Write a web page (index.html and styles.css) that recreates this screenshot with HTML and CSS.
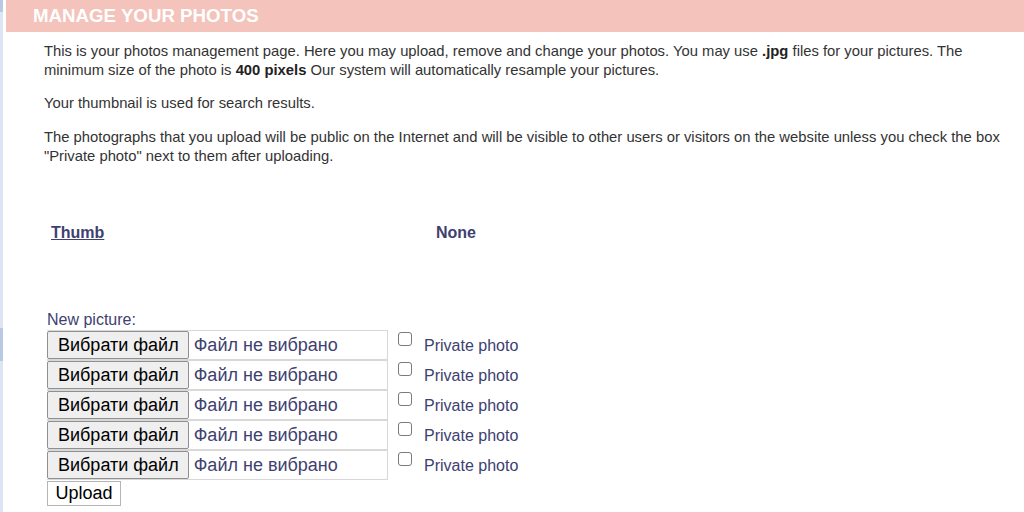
FILE: index.html
```html
<!DOCTYPE html>
<html>
<head>
<meta charset="utf-8">
<link rel="stylesheet" href="styles.css">
</head>
<body>
<div class="page">
  <div class="stripe"></div>
  <div class="main">
    <div class="header">MANAGE YOUR PHOTOS</div>
    <div class="content">
      <p class="para">This is your photos management page. Here you may upload, remove and change your photos. You may use <b>.jpg</b> files for your pictures. The minimum size of the photo is <b>400 pixels</b> Our system will automatically resample your pictures.</p>
      <p class="para">Your thumbnail is used for search results.</p>
      <p class="para">The photographs that you upload will be public on the Internet and will be visible to other users or visitors on the website unless you check the box "Private photo" next to them after uploading.</p>

      <div class="thumbs">
        <a class="thumb-link" href="#">Thumb</a>
        <span class="thumb-none">None</span>
      </div>

      <div class="upload">
        <div class="new-label">New picture:</div>
        <div class="file-row">
          <div class="file"><span class="file-btn">Вибрати файл</span><span class="file-name">Файл не вибрано</span></div>
          <span class="check"></span><span class="private">Private photo</span>
        </div>
        <div class="file-row">
          <div class="file"><span class="file-btn">Вибрати файл</span><span class="file-name">Файл не вибрано</span></div>
          <span class="check"></span><span class="private">Private photo</span>
        </div>
        <div class="file-row">
          <div class="file"><span class="file-btn">Вибрати файл</span><span class="file-name">Файл не вибрано</span></div>
          <span class="check"></span><span class="private">Private photo</span>
        </div>
        <div class="file-row">
          <div class="file"><span class="file-btn">Вибрати файл</span><span class="file-name">Файл не вибрано</span></div>
          <span class="check"></span><span class="private">Private photo</span>
        </div>
        <div class="file-row">
          <div class="file"><span class="file-btn">Вибрати файл</span><span class="file-name">Файл не вибрано</span></div>
          <span class="check"></span><span class="private">Private photo</span>
        </div>
        <div class="upload-row"><span class="upload-btn">Upload</span></div>
      </div>
    </div>
  </div>
</div>
</body>
</html>
```

FILE: styles.css
```css
html, body {
  margin: 0;
  padding: 0;
  background: #ffffff;
}
body {
  font-family: "Liberation Sans", Arial, sans-serif;
  width: 1024px;
  height: 512px;
  overflow: hidden;
}
.page {
  display: flex;
  height: 512px;
}
.stripe {
  width: 3px;
  flex: none;
  margin-right: 3px;
  background: linear-gradient(to bottom,
    #b9c9e3 0, #b9c9e3 12px,
    #dde5f2 12px, #dde5f2 328px,
    #b9c9e3 328px, #b9c9e3 361px,
    #dde5f2 361px, #dde5f2 100%);
}
.main {
  flex: 1;
  min-width: 0;
}
.header {
  height: 32px;
  background: #f3c3bc;
  color: #ffffff;
  font-weight: bold;
  font-size: 18.7px;
  line-height: 32px;
  padding-left: 27px;
}
.content {
  padding: 0 0 0 38px;
}
.para {
  margin: 10px 0 15px 0;
  font-size: 14.8px;
  line-height: 18.7px;
  color: #333333;
}
.para b {
  color: #222222;
}
.thumbs {
  display: flex;
  margin-top: 58px;
  padding-left: 7px;
  font-size: 16px;
  line-height: 18px;
  font-weight: bold;
  color: #3e4170;
}
.thumb-link {
  color: #3e4170;
  text-decoration: underline;
  width: 385px;
}
.thumb-none {
  color: #3e4170;
}
.upload {
  margin-top: 69px;
  padding-left: 3px;
}
.new-label {
  font-size: 16px;
  line-height: 18px;
  color: #3e4170;
  height: 19px;
}
.file-row {
  display: flex;
  align-items: flex-start;
  height: 30px;
}
.file {
  display: flex;
  width: 341px;
  height: 30px;
  box-sizing: border-box;
  border: 1px solid #d8d8d8;
  border-left: none;
}
.file-btn {
  display: block;
  height: 28px;
  box-sizing: border-box;
  padding: 0 9px 0 10px;
  background: #efefef;
  border: 1px solid #8f8f8f;
  border-radius: 2px;
  font-size: 18px;
  line-height: 26px;
  color: #000000;
  white-space: nowrap;
}
.file-name {
  display: block;
  padding-left: 5px;
  font-size: 18px;
  line-height: 28px;
  color: #3e4170;
  white-space: nowrap;
}
.check {
  display: block;
  width: 14px;
  height: 14px;
  box-sizing: border-box;
  border: 1px solid #7a7a7a;
  border-radius: 3px;
  margin: 2px 0 0 10px;
  background: #ffffff;
}
.private {
  display: block;
  margin-left: 12px;
  font-size: 16px;
  line-height: 18px;
  padding-top: 7px;
  color: #3e4170;
}
.upload-row {
  padding-top: 1px;
}
.upload-btn {
  display: inline-block;
  width: 74px;
  height: 25px;
  box-sizing: border-box;
  border: 1px solid #b5b5b5;
  font-size: 18px;
  line-height: 23px;
  text-align: center;
  color: #000000;
  background: #ffffff;
}
```
